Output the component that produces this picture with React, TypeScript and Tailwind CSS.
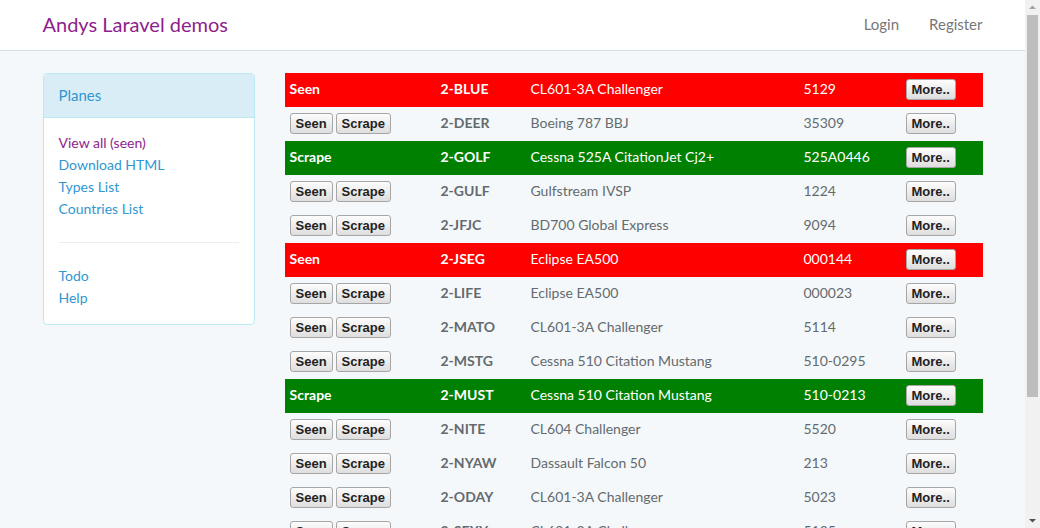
import React from 'react'

type Plane = {
  status?: 'Seen' | 'Scrape'
  reg: string
  type: string
  serial: string
}

const planes: Plane[] = [
  { status: 'Seen', reg: '2-BLUE', type: 'CL601-3A Challenger', serial: '5129' },
  { reg: '2-DEER', type: 'Boeing 787 BBJ', serial: '35309' },
  { status: 'Scrape', reg: '2-GOLF', type: 'Cessna 525A CitationJet Cj2+', serial: '525A0446' },
  { reg: '2-GULF', type: 'Gulfstream IVSP', serial: '1224' },
  { reg: '2-JFJC', type: 'BD700 Global Express', serial: '9094' },
  { status: 'Seen', reg: '2-JSEG', type: 'Eclipse EA500', serial: '000144' },
  { reg: '2-LIFE', type: 'Eclipse EA500', serial: '000023' },
  { reg: '2-MATO', type: 'CL601-3A Challenger', serial: '5114' },
  { reg: '2-MSTG', type: 'Cessna 510 Citation Mustang', serial: '510-0295' },
  { status: 'Scrape', reg: '2-MUST', type: 'Cessna 510 Citation Mustang', serial: '510-0213' },
  { reg: '2-NITE', type: 'CL604 Challenger', serial: '5520' },
  { reg: '2-NYAW', type: 'Dassault Falcon 50', serial: '213' },
  { reg: '2-ODAY', type: 'CL601-3A Challenger', serial: '5023' },
  { reg: '2-SEXY', type: 'CL601-3A Challenger', serial: '5105' },
]

const btn =
  "h-[21px] px-[5px] rounded-[3px] border border-[#a6a6a6] bg-gradient-to-b from-[#fdfdfd] to-[#dedede] text-[13px] font-bold text-[#222] leading-none font-['Liberation_Sans',Arial,sans-serif]"

const cell = 'px-[5px] pb-[2px]'

const PlaneRow = ({ p }: { p: Plane }) => {
  const bg = p.status === 'Seen' ? 'bg-[#ff0000] text-white' : p.status === 'Scrape' ? 'bg-[#008000] text-white' : 'text-[#636b6f]'
  return (
    <tr className={`h-[34px] ${bg}`}>
      <td className={`${cell} font-bold`}>
        {p.status ? (
          p.status
        ) : (
          <div className="flex gap-[3px]">
            <button className={btn}>Seen</button>
            <button className={btn}>Scrape</button>
          </div>
        )}
      </td>
      <td className={`${cell} font-bold`}>{p.reg}</td>
      <td className={cell}>{p.type}</td>
      <td className={cell}>{p.serial}</td>
      <td className={cell}>
        <button className={btn}>More..</button>
      </td>
    </tr>
  )
}

// fake browser scrollbar, as in the screenshot
const Scrollbar = () => (
  <div className="w-[15px] shrink-0 bg-[#f1f1f1] flex flex-col items-center">
    <svg width="15" height="15" viewBox="0 0 15 15">
      <path d="M4 9 L7.5 5.5 L11 9 Z" fill="#a3a3a3" />
    </svg>
    <div className="w-[11px] h-[382px] bg-[#bdbdbd]" />
    <div className="flex-1" />
    <svg width="15" height="15" viewBox="0 0 15 15">
      <path d="M4 6 L11 6 L7.5 9.5 Z" fill="#505050" />
    </svg>
  </div>
)

export default function App() {
  return (
    <div className="h-screen flex overflow-hidden bg-[#f5f8fa] text-[#636b6f] text-[14px] leading-[22px] font-['Lato','Open_Sans',sans-serif]">
      <div className="flex-1 overflow-hidden">
        {/* Navbar */}
        <nav className="h-[51px] bg-white border-b border-[#d3e0e9] mb-[22px]">
          <div className="w-[970px] mx-auto px-[15px] pb-[3px] h-full flex items-center justify-between">
            <a className="text-[20px] text-[#8e1e8e]">Andys Laravel demos</a>
            <div className="flex -mr-[15px] text-[15px] text-[#777]">
              <a className="px-[15px]">Login</a>
              <a className="px-[15px]">Register</a>
            </div>
          </div>
        </nav>

        <div className="w-[970px] mx-auto px-[15px] flex gap-[30px] items-start">
          {/* Sidebar */}
          <div className="w-[212px] shrink-0 bg-white border border-[#bce8f1] rounded-[4px]">
            <div className="h-[44px] px-[15px] pb-[2px] flex items-center bg-[#d9edf7] border-b border-[#bce8f1] rounded-t-[4px] text-[15px] text-[#3097d1]">
              Planes
            </div>
            <div className="px-[15px] pt-[14px] pb-[15px]">
              <ul className="text-[#3097d1]">
                <li className="text-[#8e1e8e]">View all (seen)</li>
                <li>Download HTML</li>
                <li>Types List</li>
                <li>Countries List</li>
              </ul>
              <hr className="my-[22px] border-[#eeeeee]" />
              <ul className="text-[#3097d1]">
                <li>Todo</li>
                <li>Help</li>
              </ul>
            </div>
          </div>

          {/* Planes table */}
          <div className="flex-1">
            <table className="w-full table-fixed border-collapse">
              <colgroup>
                <col className="w-[151px]" />
                <col className="w-[90px]" />
                <col className="w-[273px]" />
                <col className="w-[102px]" />
                <col />
              </colgroup>
              <tbody>
                {planes.map((p) => (
                  <PlaneRow key={p.reg} p={p} />
                ))}
              </tbody>
            </table>
          </div>
        </div>
      </div>
      <Scrollbar />
    </div>
  )
}
